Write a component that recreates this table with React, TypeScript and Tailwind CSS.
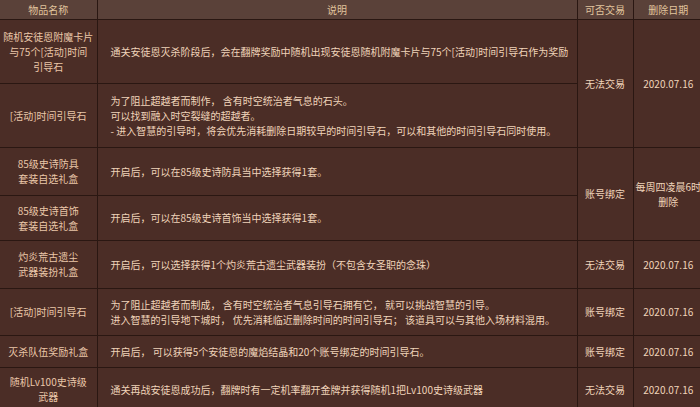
import type { ReactNode } from 'react'

interface Row {
  name: ReactNode
  desc: ReactNode
  trade?: { text: string; span: number }
  date?: { text: ReactNode; span: number }
  h: string
}

const rows: Row[] = [
  {
    name: (
      <>
        随机安徒恩附魔卡片
        <br />
        与75个[活动]时间
        <br />
        引导石
      </>
    ),
    desc: '通关安徒恩灭杀阶段后，会在翻牌奖励中随机出现安徒恩随机附魔卡片与75个[活动]时间引导石作为奖励',
    trade: { text: '无法交易', span: 2 },
    date: { text: '2020.07.16', span: 2 },
    h: 'h-[64px]',
  },
  {
    name: '[活动]时间引导石',
    desc: (
      <>
        为了阻止超越者而制作， 含有时空统治者气息的石头。
        <br />
        可以找到融入时空裂缝的超越者。
        <br />- 进入智慧的引导时，将会优先消耗删除日期较早的时间引导石，可以和其他的时间引导石同时使用。
      </>
    ),
    h: 'h-[64px]',
  },
  {
    name: (
      <>
        85级史诗防具
        <br />
        套装自选礼盒
      </>
    ),
    desc: '开启后，可以在85级史诗防具当中选择获得1套。',
    trade: { text: '账号绑定', span: 2 },
    date: {
      text: (
        <>
          <span className="whitespace-nowrap">每周四凌晨6时</span>
          <br />
          删除
        </>
      ),
      span: 2,
    },
    h: 'h-[48px]',
  },
  {
    name: (
      <>
        85级史诗首饰
        <br />
        套装自选礼盒
      </>
    ),
    desc: '开启后，可以在85级史诗首饰当中选择获得1套。',
    h: 'h-[45px]',
  },
  {
    name: (
      <>
        灼炎荒古遗尘
        <br />
        武器装扮礼盒
      </>
    ),
    desc: '开启后，可以选择获得1个灼炎荒古遗尘武器装扮（不包含女圣职的念珠）',
    trade: { text: '无法交易', span: 1 },
    date: { text: '2020.07.16', span: 1 },
    h: 'h-[48px]',
  },
  {
    name: '[活动]时间引导石',
    desc: (
      <>
        为了阻止超越者而制成， 含有时空统治者气息引导石拥有它， 就可以挑战智慧的引导。
        <br />
        进入智慧的引导地下城时， 优先消耗临近删除时间的时间引导石； 该道具可以与其他入场材料混用。
      </>
    ),
    trade: { text: '账号绑定', span: 1 },
    date: { text: '2020.07.16', span: 1 },
    h: 'h-[47px]',
  },
  {
    name: '灭杀队伍奖励礼盒',
    desc: '开启后， 可以获得5个安徒恩的魔焰结晶和20个账号绑定的时间引导石。',
    trade: { text: '账号绑定', span: 1 },
    date: { text: '2020.07.16', span: 1 },
    h: 'h-[32px]',
  },
  {
    name: (
      <>
        随机Lv100史诗级
        <br />
        武器
      </>
    ),
    desc: '通关再战安徒恩成功后，翻牌时有一定机率翻开金牌并获得随机1把Lv100史诗级武器',
    trade: { text: '无法交易', span: 1 },
    date: { text: '2020.07.16', span: 1 },
    h: 'h-[44px]',
  },
]

const cell = 'border-b border-r border-[#2a1712] align-middle'

export default function App() {
  return (
    <div className="h-[407px] w-[700px] overflow-hidden bg-[#4b2d26] font-['Noto_Sans_CJK_SC',sans-serif] text-[10px] leading-[15px] text-[#f0d4ba]">
      <table className="w-[703px] table-fixed border-collapse">
        <colgroup>
          <col className="w-[97px]" />
          <col className="w-[480px]" />
          <col className="w-[56px]" />
          <col className="w-[70px]" />
        </colgroup>
        <thead>
          <tr className="h-[19px] bg-[#5a4139] text-[#e0c49d]">
            <th className={`${cell} font-normal`}>物品名称</th>
            <th className={`${cell} font-normal`}>说明</th>
            <th className={`${cell} font-normal`}>可否交易</th>
            <th className={`${cell} border-r-0 font-normal`}>删除日期</th>
          </tr>
        </thead>
        <tbody>
          {rows.map((row, i) => (
            <tr key={i} className={row.h}>
              <td className={`${cell} px-[2px] text-center text-[#eac7a9]`}>
                {row.name}
              </td>
              <td className={`${cell} pl-[13px] pr-2`}>{row.desc}</td>
              {row.trade && (
                <td rowSpan={row.trade.span} className={`${cell} text-center`}>
                  {row.trade.text}
                </td>
              )}
              {row.date && (
                <td
                  rowSpan={row.date.span}
                  className={`${cell} border-r-0 px-[2px] text-center`}
                >
                  {row.date.text}
                </td>
              )}
            </tr>
          ))}
        </tbody>
      </table>
    </div>
  )
}
